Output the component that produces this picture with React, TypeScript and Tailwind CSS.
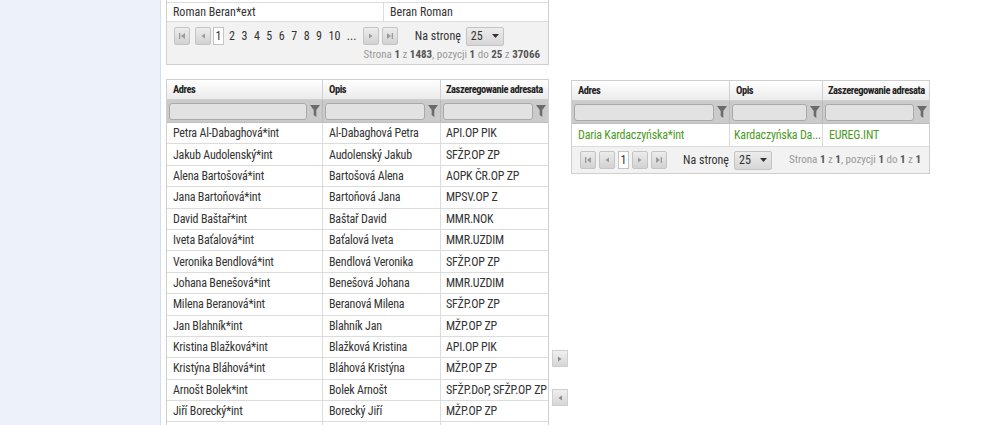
import React from "react"

const font = { fontFamily: '"Roboto Condensed", "Liberation Sans Narrow", "Arial Narrow", Roboto, sans-serif' }

const rows = [
  ["Petra Al-Dabaghová*int", "Al-Dabaghová Petra", "API.OP PIK"],
  ["Jakub Audolenský*int", "Audolenský Jakub", "SFŽP.OP ZP"],
  ["Alena Bartošová*int", "Bartošová Alena", "AOPK ČR.OP ZP"],
  ["Jana Bartoňová*int", "Bartoňová Jana", "MPSV.OP Z"],
  ["David Baštař*int", "Baštař David", "MMR.NOK"],
  ["Iveta Baťalová*int", "Baťalová Iveta", "MMR.UZDIM"],
  ["Veronika Bendlová*int", "Bendlová Veronika", "SFŽP.OP ZP"],
  ["Johana Benešová*int", "Benešová Johana", "MMR.UZDIM"],
  ["Milena Beranová*int", "Beranová Milena", "SFŽP.OP ZP"],
  ["Jan Blahník*int", "Blahník Jan", "MŽP.OP ZP"],
  ["Kristina Blažková*int", "Blažková Kristina", "API.OP PIK"],
  ["Kristýna Bláhová*int", "Bláhová Kristýna", "MŽP.OP ZP"],
  ["Arnošt Bolek*int", "Bolek Arnošt", "SFŽP.DoP, SFŽP.OP ZP"],
  ["Jiří Borecký*int", "Borecký Jiří", "MŽP.OP ZP"],
  ["", "", ""],
]

function Arrow({ kind, color = "#9a9a9a" }: { kind: "first" | "prev" | "next" | "last"; color?: string }) {
  return (
    <svg width="8" height="8" viewBox="0 0 8 8" fill={color}>
      {kind === "first" && <><rect x="1" y="1" width="1.3" height="6" /><path d="M7 1 L3 4 L7 7 Z" /></>}
      {kind === "prev" && <path d="M6 1.5 L2.5 4 L6 6.5 Z" />}
      {kind === "next" && <path d="M2 1.5 L5.5 4 L2 6.5 Z" />}
      {kind === "last" && <><path d="M1 1 L5 4 L1 7 Z" /><rect x="5.7" y="1" width="1.3" height="6" /></>}
    </svg>
  )
}

function PageBtn({ kind }: { kind: "first" | "prev" | "next" | "last" }) {
  return (
    <div className="w-[16px] h-[18px] flex items-center justify-center border border-[#c4c4c4] rounded-[2px] bg-gradient-to-b from-[#ececec] to-[#d2d2d2]">
      <Arrow kind={kind} />
    </div>
  )
}

function PerPage() {
  return (
    <div className="flex items-center gap-[5px]">
      <span className="text-[#333]">Na stronę</span>
      <div className="w-[38px] h-[19px] flex items-center justify-between px-[4px] border border-[#c4c4c4] rounded-[2px] bg-gradient-to-b from-[#ececec] to-[#d6d6d6] text-[#333]">
        <span>25</span>
        <svg width="7" height="4" viewBox="0 0 7 4" fill="#333"><path d="M0 0 H7 L3.5 4 Z" /></svg>
      </div>
    </div>
  )
}

function Funnel() {
  return (
    <svg width="10" height="12" viewBox="0 0 10 12" fill="#6b6b6b">
      <path d="M0 0 H10 L6.3 5 V12 L3.7 10 V5 Z" />
    </svg>
  )
}

function FilterCell({ last }: { last?: boolean }) {
  return (
    <div className={`flex items-center gap-[3px] px-[2px] ${last ? "" : "border-r border-[#b8b8b8]"}`}>
      <div className="flex-1 h-[17px] rounded-[3px] border border-[#a9a9a9] bg-[#e2e2e2]" />
      <Funnel />
    </div>
  )
}

function HeaderRow({ cols }: { cols: string }) {
  return (
    <>
      <div className={`grid ${cols} h-[20px] bg-gradient-to-b from-white to-[#ebebeb] border-b border-[#d0d0d0] font-bold text-[10.5px] text-[#222] whitespace-nowrap tracking-[-0.45px]`}>
        <div className="px-[6px] flex items-center border-r border-[#d0d0d0]">Adres</div>
        <div className="px-[6px] flex items-center border-r border-[#d0d0d0]">Opis</div>
        <div className="px-[5px] flex items-center">Zaszeregowanie adresata</div>
      </div>
      <div className={`grid ${cols} h-[23px] bg-[#cbcbcb] border-b border-[#bdbdbd]`}>
        <FilterCell />
        <FilterCell />
        <FilterCell last />
      </div>
    </>
  )
}

export default function App() {
  return (
    <div className="flex h-[425px] overflow-hidden bg-white text-[12px] text-[#333]" style={font}>
      <aside className="w-[161px] shrink-0 bg-[#edf1fa] border-r border-[#d7deeb]" />
      <main className="flex-1 pl-[5px] flex gap-[22px]">
        <div className="w-[383px] flex flex-col">
          {/* previous list panel */}
          <div className="border-x border-b border-[#cfcfcf] bg-[#f2f2f2]">
            <div className="h-[2px] bg-white" />
            <div className="grid grid-cols-[217px_1fr] h-[20px] bg-white border-t border-b border-[#dcdcdc]">
              <div className="px-[6px] flex items-center border-r border-[#dcdcdc]">Roman Beran*ext</div>
              <div className="px-[6px] flex items-center">Beran Roman</div>
            </div>
            <div className="flex items-center h-[25px] pl-[7px] pt-[3px]">
              <div className="flex items-center gap-[5px]">
                <PageBtn kind="first" />
                <PageBtn kind="prev" />
              </div>
              <div className="flex items-center ml-[2px] gap-[3.5px]">
                <span className="w-[11px] h-[18px] flex items-center justify-center bg-white border border-[#c4c4c4]">1</span>
                {["2", "3", "4", "5", "6", "7", "8", "9", "10", "..."].map(n => (
                  <span key={n} className="px-[1.5px]">{n}</span>
                ))}
              </div>
              <div className="flex items-center gap-[3px] ml-[5px]">
                <PageBtn kind="next" />
                <PageBtn kind="last" />
              </div>
              <div className="ml-[17px]"><PerPage /></div>
            </div>
            <div className="text-right pr-[8px] h-[17px] text-[11px] text-[#999]">
              Strona <b className="text-[#555]">1</b> z <b className="text-[#555]">1483</b>, pozycji <b className="text-[#555]">1</b> do <b className="text-[#555]">25</b> z <b className="text-[#555]">37066</b>
            </div>
          </div>

          {/* available list */}
          <div className="mt-[14px] border border-[#cfcfcf]">
            <HeaderRow cols="grid-cols-[156px_118px_1fr]" />
            {rows.map((r, i) => (
              <div key={i} className="grid grid-cols-[156px_118px_1fr] h-[21.4px] bg-white border-b border-[#dcdcdc] tracking-[-0.2px]">
                <div className="px-[6px] flex items-center border-r border-[#dcdcdc] whitespace-nowrap overflow-hidden">{r[0]}</div>
                <div className="px-[6px] flex items-center border-r border-[#dcdcdc] whitespace-nowrap overflow-hidden">{r[1]}</div>
                <div className="pl-[5px] flex items-center whitespace-nowrap">{r[2]}</div>
              </div>
            ))}
          </div>
        </div>

        {/* move buttons */}
        <div className="w-[16px] shrink-0 flex flex-col ml-[-19px] mr-[-19px] pt-[350px] gap-[22px]">
          <div className="w-[16px] h-[17px] flex items-center justify-center border border-[#cfcfcf] bg-gradient-to-b from-[#f0f0f0] to-[#d6d6d6]">
            <Arrow kind="next" color="#8a8a8a" />
          </div>
          <div className="w-[16px] h-[17px] flex items-center justify-center border border-[#cfcfcf] bg-gradient-to-b from-[#f0f0f0] to-[#d6d6d6]">
            <Arrow kind="prev" color="#8a8a8a" />
          </div>
        </div>

        {/* selected list */}
        <div className="w-[359px] mt-[80px] self-start border border-[#cfcfcf] bg-[#f2f2f2]">
          <HeaderRow cols="grid-cols-[158px_93px_1fr]" />
          <div className="grid grid-cols-[158px_93px_1fr] h-[23px] bg-white border-b border-[#dcdcdc] text-[#4b9c25] tracking-[-0.2px]">
            <div className="px-[6px] flex items-center border-r border-[#dcdcdc] whitespace-nowrap">Daria Kardaczyńska*int</div>
            <div className="pl-[4px] flex items-center border-r border-[#dcdcdc] whitespace-nowrap">Kardaczyńska Da...</div>
            <div className="px-[6px] flex items-center">EUREG.INT</div>
          </div>
          <div className="flex items-center h-[26px] pl-[8px]">
            <div className="flex items-center gap-[3px]">
              <PageBtn kind="first" />
              <PageBtn kind="prev" />
              <span className="w-[11px] h-[18px] flex items-center justify-center bg-white border border-[#c4c4c4]">1</span>
              <PageBtn kind="next" />
              <PageBtn kind="last" />
            </div>
            <div className="ml-[16px]"><PerPage /></div>
            <div className="ml-auto pr-[8px] text-[11px] text-[#999]">
              Strona <b className="text-[#555]">1</b> z <b className="text-[#555]">1</b>, pozycji <b className="text-[#555]">1</b> do <b className="text-[#555]">1</b> z <b className="text-[#555]">1</b>
            </div>
          </div>
        </div>
      </main>
    </div>
  )
}
